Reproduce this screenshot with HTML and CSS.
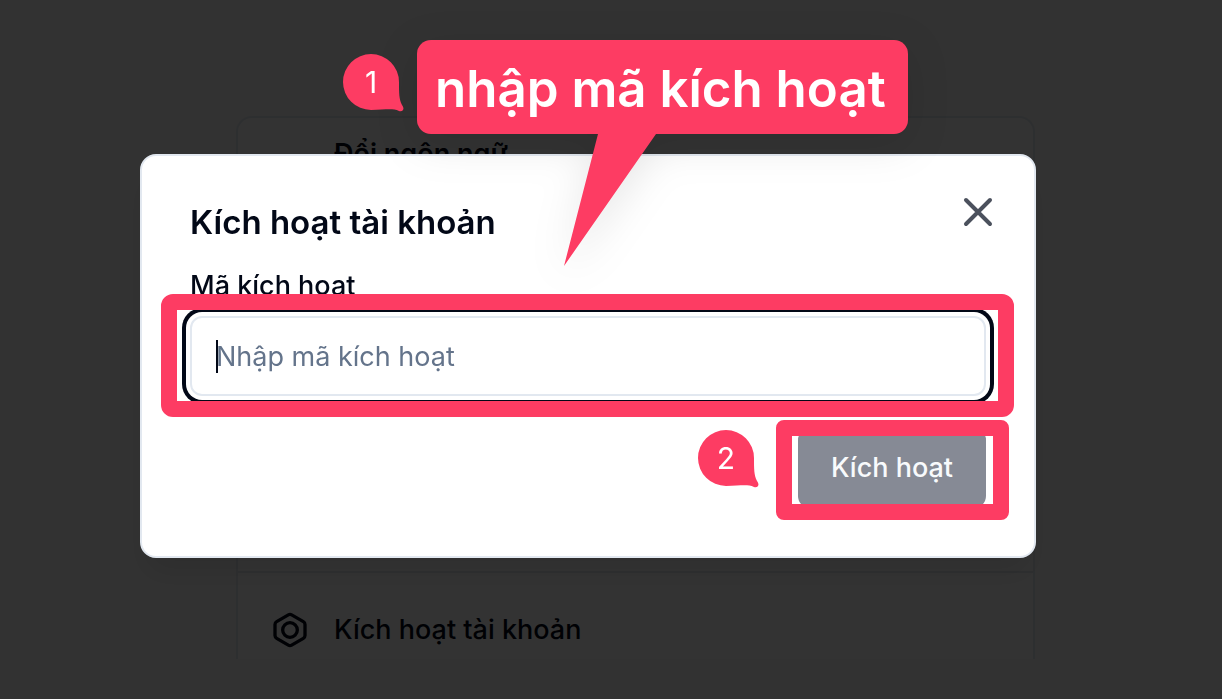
FILE: index.html
```html
<!DOCTYPE html>
<html lang="vi">
<head>
<meta charset="utf-8">
<meta name="viewport" content="width=device-width, initial-scale=1">
<title>Kích hoạt tài khoản</title>
<link rel="stylesheet" href="styles.css">
</head>
<body>
<main class="page">
  <ul class="settings">
    <li class="settings-row settings-row-tall"><span>Đổi ngôn ngữ</span></li>
    <li class="settings-row">
      <svg class="settings-icon" viewBox="0 0 24 24" aria-hidden="true"><path d="M21 8.7v6.6a2 2 0 0 1-1 1.700l-7 4.100a2 2 0 0 1-2 0L4 17a2 2 0 0 1-1-1.700V8.700a2 2 0 0 1 1-1.700l7-4.100a2 2 0 0 1 2 0L20 7a2 2 0 0 1 1 1.700Z"/><circle cx="12" cy="12" r="4.400"/></svg>
      <span>Kích hoạt tài khoản</span>
    </li>
  </ul>
</main>

<div class="backdrop">
  <section class="dialog" role="dialog" aria-modal="true" aria-labelledby="dialog-title">
    <h1 class="dialog-title" id="dialog-title">Kích hoạt tài khoản</h1>
    <button class="close" type="button" aria-label="Đóng">
      <svg viewBox="0 0 24 24" aria-hidden="true"><path d="M6 6l12 12M18 6L6 18"/></svg>
    </button>
    <form class="form">
      <div class="field">
        <label class="field-label" for="code">Mã kích hoạt</label>
        <div class="field-box">
          <input class="field-input" id="code" type="text" placeholder="Nhập mã kích hoạt">
          <span class="caret"></span>
          <span class="highlight highlight-field"></span>
        </div>
      </div>
      <div class="actions">
        <div class="action">
          <button class="submit" type="submit" disabled>Kích hoạt</button>
          <span class="highlight highlight-submit"></span>
          <div class="pin pin-submit">
            <svg class="pin-shape" viewBox="0 0 61 58" aria-hidden="true"><path d="M28 0A28 28 0 0 1 56 28C56 39 56 45 59 51C62 55 60 58 56 57C49 54 42 56 28 56A28 28 0 0 1 28 0Z"/></svg>
            <span class="pin-number">2</span>
          </div>
        </div>
      </div>
    </form>

    <div class="callout">
      <svg class="callout-tail" viewBox="0 0 92 134" aria-hidden="true"><path d="M34 0H92V2L0 134L34 2Z"/></svg>
      <span class="callout-text">nhập mã kích hoạt</span>
    </div>
    <div class="pin pin-callout">
      <svg class="pin-shape" viewBox="0 0 61 58" aria-hidden="true"><path d="M28 0A28 28 0 0 1 56 28C56 39 56 45 59 51C62 55 60 58 56 57C49 54 42 56 28 56A28 28 0 0 1 28 0Z"/></svg>
      <span class="pin-number">1</span>
    </div>
  </section>
</div>
</body>
</html>
```

FILE: styles.css
```css
:root {
  --ink: #020817;
  --line: #e2e8f0;
  --muted: #64748b;
  --accent: #fd3c63;
}

* {
  box-sizing: border-box;
}

body {
  margin: 0;
  background: #f7f7f7;
  color: var(--ink);
  font-family: Inter, "Open Sans", sans-serif;
  font-size: 27px;
  line-height: 28px;
}

.page {
  height: 100vh;
  padding: 116px 187px 40px 236px;
}

.settings {
  height: 100%;
  margin: 0;
  padding: 0;
  overflow: hidden;
  list-style: none;
  background: #fff;
  border: 2px solid var(--line);
  border-bottom: 0;
  border-radius: 16px 16px 0 0;
  font-weight: 500;
}

.settings-row {
  display: flex;
  align-items: center;
  gap: 24px;
  min-height: 114px;
  padding: 0 32px;
}

.settings-row-tall {
  align-items: flex-start;
  min-height: 455px;
  padding: 22px 32px 0 96px;
  border-bottom: 2px solid var(--line);
  font-weight: 600;
}

.settings-icon {
  width: 40px;
  height: 40px;
  fill: none;
  stroke: currentColor;
  stroke-width: 2;
}

.backdrop {
  position: fixed;
  inset: 0;
  display: flex;
  justify-content: center;
  align-items: flex-start;
  padding: 154px 46px 0 0;
  background: rgba(0, 0, 0, 0.8);
}

.dialog {
  position: relative;
  display: grid;
  gap: 32px;
  width: 100%;
  max-width: 896px;
  padding: 48px;
  background: #fff;
  border: 2px solid var(--line);
  border-radius: 16px;
  box-shadow: 0 20px 30px -6px rgba(0, 0, 0, 0.1);
}

.dialog-title {
  margin: 0;
  font-size: 33px;
  line-height: 36px;
  font-weight: 600;
}

.close {
  position: absolute;
  top: 32px;
  right: 32px;
  width: 48px;
  height: 48px;
  padding: 0;
  background: none;
  border: 0;
  color: #4b515d;
}

.close svg {
  display: block;
  fill: none;
  stroke: currentColor;
  stroke-width: 2;
  stroke-linecap: round;
}

.form {
  display: grid;
  gap: 32px;
}

.field {
  display: grid;
  gap: 16px;
}

.field-label {
  font-weight: 500;
}

.field-box,
.action {
  position: relative;
}

.field-input {
  display: block;
  width: 100%;
  height: 80px;
  padding: 0 24px;
  background: #fff;
  border: 2px solid var(--line);
  border-radius: 12px;
  outline: 0;
  box-shadow: 0 0 0 4px #fff, 0 0 0 8px var(--ink);
  color: var(--ink);
  font: inherit;
}

.field-input::placeholder {
  color: var(--muted);
  opacity: 1;
}

.caret {
  position: absolute;
  top: 24px;
  left: 26px;
  width: 2px;
  height: 33px;
  background: var(--ink);
}

.actions {
  display: flex;
  justify-content: flex-end;
}

.submit {
  display: block;
  min-width: 188px;
  height: 80px;
  padding: 0 32px;
  background: #868a95;
  border: 0;
  border-radius: 12px;
  color: #f8fafc;
  font: inherit;
  font-weight: 500;
}

.highlight {
  position: absolute;
  border: 16px solid var(--accent);
  border-radius: 12px;
  pointer-events: none;
}

.highlight-field {
  inset: -22px -28px -21px -29px;
}

.highlight-submit {
  inset: -8px -23px -12px -22px;
  border-radius: 8px;
}

.pin {
  position: absolute;
  width: 61px;
  height: 58px;
}

.pin-shape {
  position: absolute;
  inset: 0;
  fill: var(--accent);
}

.pin-number {
  position: relative;
  display: block;
  width: 56px;
  color: #fff;
  font-size: 30px;
  line-height: 56px;
  text-align: center;
}

.pin-submit {
  top: 2px;
  left: -100px;
}

.pin-callout {
  top: -102px;
  left: 201px;
}

.callout {
  position: absolute;
  top: -116px;
  left: 275px;
  padding: 14px 22px 10px 18px;
  background: var(--accent);
  border-radius: 14px;
  filter: drop-shadow(0 10px 20px rgba(0, 0, 0, 0.1));
  color: #fff;
  font-size: 51px;
  line-height: 70px;
  font-weight: 600;
  white-space: nowrap;
}

.callout-tail {
  position: absolute;
  top: 92px;
  left: 147px;
  width: 92px;
  height: 134px;
  fill: var(--accent);
}

.callout-text {
  position: relative;
}
```
